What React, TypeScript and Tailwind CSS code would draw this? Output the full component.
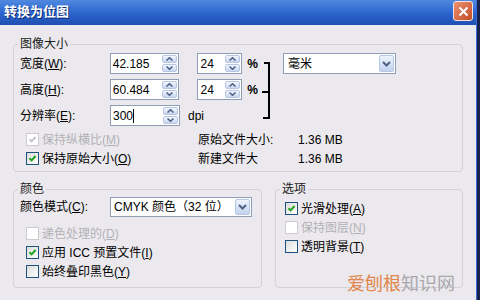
import React from 'react';

type ArrowProps = { up?: boolean };

const Arrow: React.FC<ArrowProps> = ({ up }) => (
  <svg width="7" height="4" viewBox="0 0 7 4">
    <path
      d={up ? 'M0.5 3.5 L3.5 0.7 L6.5 3.5' : 'M0.5 0.5 L3.5 3.3 L6.5 0.5'}
      fill="none"
      stroke="#4d6185"
      strokeWidth="1.5"
    />
  </svg>
);

const Spin: React.FC = () => (
  <div className="flex flex-col gap-[1px] w-[16px] h-full py-[1px] pr-[1px]">
    <div className="flex-1 flex items-center justify-center rounded-[2px] border border-[#b7c6e3] bg-linear-to-b from-[#f3f6fc] to-[#c9d6ee]">
      <Arrow up />
    </div>
    <div className="flex-1 flex items-center justify-center rounded-[2px] border border-[#b7c6e3] bg-linear-to-b from-[#f3f6fc] to-[#c9d6ee]">
      <Arrow />
    </div>
  </div>
);

type NumBoxProps = { value: string; width: string; cursor?: boolean };

const NumBox: React.FC<NumBoxProps> = ({ value, width, cursor }) => (
  <div className={`flex h-[21px] border border-[#8e9fb5] bg-white ${width}`}>
    <div className="flex-1 flex items-center pl-[2px]">
      <span>{value}</span>
      {cursor && <span className="w-px h-[14px] bg-black" />}
    </div>
    <Spin />
  </div>
);

const DropBtn: React.FC = () => (
  <div className="w-[16px] h-full py-[1px] pr-[1px]">
    <div className="w-full h-full flex items-center justify-center rounded-[2px] border border-[#b7c6e3] bg-linear-to-b from-[#eef3fc] to-[#c3d2ee]">
      <svg width="9" height="6" viewBox="0 0 9 6">
        <path d="M1 1 L4.5 4.5 L8 1" fill="none" stroke="#4d6185" strokeWidth="2" />
      </svg>
    </div>
  </div>
);

type CheckProps = { checked?: boolean; disabled?: boolean };

const Check: React.FC<CheckProps> = ({ checked, disabled }) => (
  <span
    className={`w-[13px] h-[13px] border flex items-center justify-center shrink-0 ${
      disabled ? 'border-[#cdcbd0] bg-white' : 'border-[#1c5180] bg-linear-to-br from-[#dcdcd7] to-white'
    }`}
  >
    {checked && (
      <svg width="9" height="9" viewBox="0 0 9 9">
        <path
          d="M1.5 4.2 L3.6 6.4 L7.6 2"
          fill="none"
          stroke={disabled ? '#c6c4c9' : '#21a121'}
          strokeWidth="2"
        />
      </svg>
    )}
  </span>
);

type CheckRowProps = CheckProps & { children: React.ReactNode };

const CheckRow: React.FC<CheckRowProps> = ({ checked, disabled, children }) => (
  <div className={`flex items-center h-[19px] gap-[3px] ${disabled ? 'text-[#b3b1b7]' : ''}`}>
    <Check checked={checked} disabled={disabled} />
    <span>{children}</span>
  </div>
);

export default function App() {
  return (
    <div className="w-[480px] h-[300px] flex overflow-hidden bg-[#14204f] text-[12px] leading-[16px] text-black font-['Liberation_Sans','Noto_Sans_CJK_SC',sans-serif]">
      <div className="relative w-[476px] h-full flex flex-col bg-[#ebe9ed]">
        {/* title bar */}
        <div className="h-[25px] flex items-start justify-between pl-[4px] pr-[3px] bg-linear-to-b from-[#5189e0] via-[#2d66cf] to-[#1f4fb2]">
          <span className="mt-[4px] text-white font-bold text-[13px] [text-shadow:1px_1px_0_#0b2b72]">转换为位图</span>
          <div className="mt-[1px] w-[20px] h-[20px] rounded-[3px] border border-[#f4e2dc] bg-linear-to-br from-[#eb9270] to-[#c44b23] flex items-center justify-center">
            <svg width="11" height="11" viewBox="0 0 11 11">
              <path d="M1.5 1.5 L9.5 9.5 M9.5 1.5 L1.5 9.5" stroke="white" strokeWidth="2" />
            </svg>
          </div>
        </div>

        <div className="flex-1 px-[13px] pt-[11px]">
          {/* 图像大小 */}
          <fieldset className="w-[450px] border border-[#d3d1d7] rounded-[4px] px-[6px] pb-[3px]">
            <legend className="px-[2px] -ml-[2px] text-[#1a1a1a]">图像大小</legend>
            <div className="flex items-start mt-[1px]">
              <div className="w-[238px] flex flex-col gap-[5px]">
                <div className="flex items-center h-[21px]">
                  <span className="w-[90px]">宽度(<u>W</u>):</span>
                  <NumBox value="42.185" width="w-[70px]" />
                  <NumBox value="24" width="w-[45px] ml-[18px]" />
                  <span className="ml-[5px] font-bold">%</span>
                </div>
                <div className="flex items-center h-[21px]">
                  <span className="w-[90px]">高度(<u>H</u>):</span>
                  <NumBox value="60.484" width="w-[70px]" />
                  <NumBox value="24" width="w-[45px] ml-[18px]" />
                  <span className="ml-[5px] font-bold">%</span>
                </div>
                <div className="flex items-center h-[21px]">
                  <span className="w-[90px]">分辨率(<u>E</u>):</span>
                  <NumBox value="300" width="w-[70px]" cursor />
                  <span className="ml-[8px]">dpi</span>
                </div>
              </div>
              <svg width="14" height="73" viewBox="0 0 14 73">
                <rect x="6" y="9" width="6" height="2" fill="#000" />
                <rect x="10" y="9" width="2" height="57" fill="#000" />
                <rect x="4" y="38" width="7" height="2" fill="#000" />
                <rect x="5" y="64" width="7" height="2" fill="#000" />
              </svg>
              <div className="ml-[11px] w-[113px] h-[21px] flex border border-[#8e9fb5] bg-white">
                <span className="flex-1 flex items-center pl-[4px]">毫米</span>
                <DropBtn />
              </div>
            </div>
            <div className="grid grid-cols-[178px_100px_auto] mt-[4px]">
              <div className="pl-[6px]">
                <CheckRow checked disabled>保持纵横比(<u>M</u>)</CheckRow>
              </div>
              <div className="flex items-center h-[19px]">原始文件大小:</div>
              <div className="flex items-center h-[19px]">1.36 MB</div>
              <div className="pl-[6px]">
                <CheckRow checked>保持原始大小(<u>O</u>)</CheckRow>
              </div>
              <div className="flex items-center h-[19px]">新建文件大</div>
              <div className="flex items-center h-[19px]">1.36 MB</div>
            </div>
          </fieldset>

          <div className="flex mt-[9px]">
            {/* 颜色 */}
            <fieldset className="w-[249px] h-[107px] border border-[#d3d1d7] rounded-[4px] px-[6px]">
              <legend className="px-[2px] -ml-[2px] text-[#1a1a1a]">颜色</legend>
              <div className="flex items-center h-[20px]">
                <span className="w-[90px]">颜色模式(<u>C</u>):</span>
                <div className="w-[142px] h-[20px] flex border border-[#8e9fb5] bg-white">
                  <span className="flex-1 flex items-center pl-[3px]">CMYK 颜色（32 位）</span>
                  <DropBtn />
                </div>
              </div>
              <div className="flex flex-col pl-[6px] mt-[7px]">
                <CheckRow disabled>递色处理的(<u>D</u>)</CheckRow>
                <CheckRow checked>应用 ICC 预置文件(<u>I</u>)</CheckRow>
                <CheckRow>始终叠印黑色(<u>Y</u>)</CheckRow>
              </div>
            </fieldset>

            {/* 选项 */}
            <fieldset className="ml-[13px] w-[188px] h-[107px] border border-[#d3d1d7] rounded-[4px] px-[6px]">
              <legend className="px-[2px] -ml-[2px] text-[#1a1a1a]">选项</legend>
              <div className="flex flex-col pl-[3px] mt-[2px]">
                <CheckRow checked>光滑处理(<u>A</u>)</CheckRow>
                <CheckRow disabled>保持图层(<u>N</u>)</CheckRow>
                <CheckRow>透明背景(<u>T</u>)</CheckRow>
              </div>
            </fieldset>
          </div>
        </div>

        {/* watermark */}
        <div className="absolute left-[347px] top-[273px] text-[18px] leading-none font-['Noto_Sans_CJK_SC',sans-serif]">
          <span className="text-[#e2864c]">爱刨根</span>
          <span className="text-[#a8a8ab]">知识网</span>
        </div>
      </div>
      <div className="w-[1px] bg-[#3a6ad2]" />
      <div className="flex-1 bg-[#17224d]" />
    </div>
  );
}
